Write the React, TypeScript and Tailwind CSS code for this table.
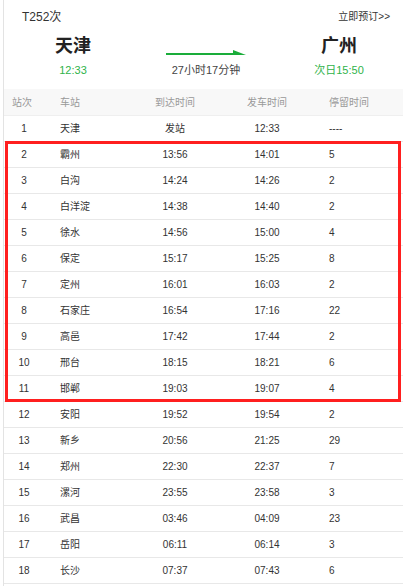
import React from 'react'

type Stop = { no: number; name: string; arrive: string; depart: string; stay: string }

const stops: Stop[] = [
    { no: 1, name: '天津', arrive: '发站', depart: '12:33', stay: '----' },
    { no: 2, name: '霸州', arrive: '13:56', depart: '14:01', stay: '5' },
    { no: 3, name: '白沟', arrive: '14:24', depart: '14:26', stay: '2' },
    { no: 4, name: '白洋淀', arrive: '14:38', depart: '14:40', stay: '2' },
    { no: 5, name: '徐水', arrive: '14:56', depart: '15:00', stay: '4' },
    { no: 6, name: '保定', arrive: '15:17', depart: '15:25', stay: '8' },
    { no: 7, name: '定州', arrive: '16:01', depart: '16:03', stay: '2' },
    { no: 8, name: '石家庄', arrive: '16:54', depart: '17:16', stay: '22' },
    { no: 9, name: '高邑', arrive: '17:42', depart: '17:44', stay: '2' },
    { no: 10, name: '邢台', arrive: '18:15', depart: '18:21', stay: '6' },
    { no: 11, name: '邯郸', arrive: '19:03', depart: '19:07', stay: '4' },
    { no: 12, name: '安阳', arrive: '19:52', depart: '19:54', stay: '2' },
    { no: 13, name: '新乡', arrive: '20:56', depart: '21:25', stay: '29' },
    { no: 14, name: '郑州', arrive: '22:30', depart: '22:37', stay: '7' },
    { no: 15, name: '漯河', arrive: '23:55', depart: '23:58', stay: '3' },
    { no: 16, name: '武昌', arrive: '03:46', depart: '04:09', stay: '23' },
    { no: 17, name: '岳阳', arrive: '06:11', depart: '06:14', stay: '3' },
    { no: 18, name: '长沙', arrive: '07:37', depart: '07:43', stay: '6' },
]

function Arrow() {
    return (
        <svg width="80" height="6" viewBox="0 0 80 6" className="block">
            <rect x="0" y="3" width="72" height="2" fill="#1aad3a" />
            <polygon points="67,0 80,5 67,5" fill="#1aad3a" />
        </svg>
    )
}

function Row(props: { stop: Stop }) {
    const { stop } = props
    return (
        <div className="flex h-[26px] items-center border-b border-[#e8e8e8] text-[10px] text-[#333]">
            <div className="w-[40px] text-center">{stop.no}</div>
            <div className="w-[92px] pl-[16px]">{stop.name}</div>
            <div className="w-[78px] text-center">{stop.arrive}</div>
            <div className="w-[106px] text-center">{stop.depart}</div>
            <div className="pl-[9px]">{stop.stay}</div>
        </div>
    )
}

export default function App() {
    return (
        <div className="relative h-[586px] w-[403px] overflow-hidden bg-white font-['Liberation_Sans','Noto_Sans_CJK_SC',sans-serif]">
            <div className="ml-[3px] h-full border-l border-[#e3e3e3]">
                <div className="flex items-center justify-between pl-[18px] pr-[13px] pt-[9px]">
                    <span className="text-[12px] leading-[16px] text-[#333]">T252次</span>
                    <span className="text-[10px] leading-[16px] text-[#333]">立即预订&gt;&gt;</span>
                </div>

                <div className="mt-[9px] flex">
                    <div className="flex w-[138px] flex-col items-center">
                        <span className="h-[24px] text-[18px] font-bold leading-[24px] text-[#222]">天津</span>
                        <span className="mt-[4px] text-[11px] leading-[16px] text-[#2fb34a]">12:33</span>
                    </div>
                    <div className="flex w-[128px] flex-col items-center">
                        <div className="flex h-[24px] items-end pb-[2px]">
                            <Arrow />
                        </div>
                        <span className="mt-[4px] text-[11px] leading-[16px] text-[#444]">27小时17分钟</span>
                    </div>
                    <div className="flex w-[120px] flex-col items-center pl-[18px]">
                        <span className="h-[24px] text-[18px] font-bold leading-[24px] text-[#222]">广州</span>
                        <span className="mt-[4px] text-[11px] leading-[16px] text-[#2fb34a]">次日15:50</span>
                    </div>
                </div>

                <div className="mt-[11px] flex h-[27px] items-center border-b border-[#efefef] bg-[#f8f8f8] text-[10px] text-[#999]">
                    <div className="w-[40px] pr-[4px] text-center">站次</div>
                    <div className="w-[92px] pl-[16px]">车站</div>
                    <div className="w-[78px] text-center">到达时间</div>
                    <div className="w-[106px] text-center">发车时间</div>
                    <div className="pl-[9px]">停留时间</div>
                </div>

                {stops.map(s => (
                    <Row key={s.no} stop={s} />
                ))}
            </div>

            <div className="pointer-events-none absolute left-[5px] top-[141px] h-[261px] w-[396px] border-[3px] border-[#ff1f1f]" />
        </div>
    )
}
